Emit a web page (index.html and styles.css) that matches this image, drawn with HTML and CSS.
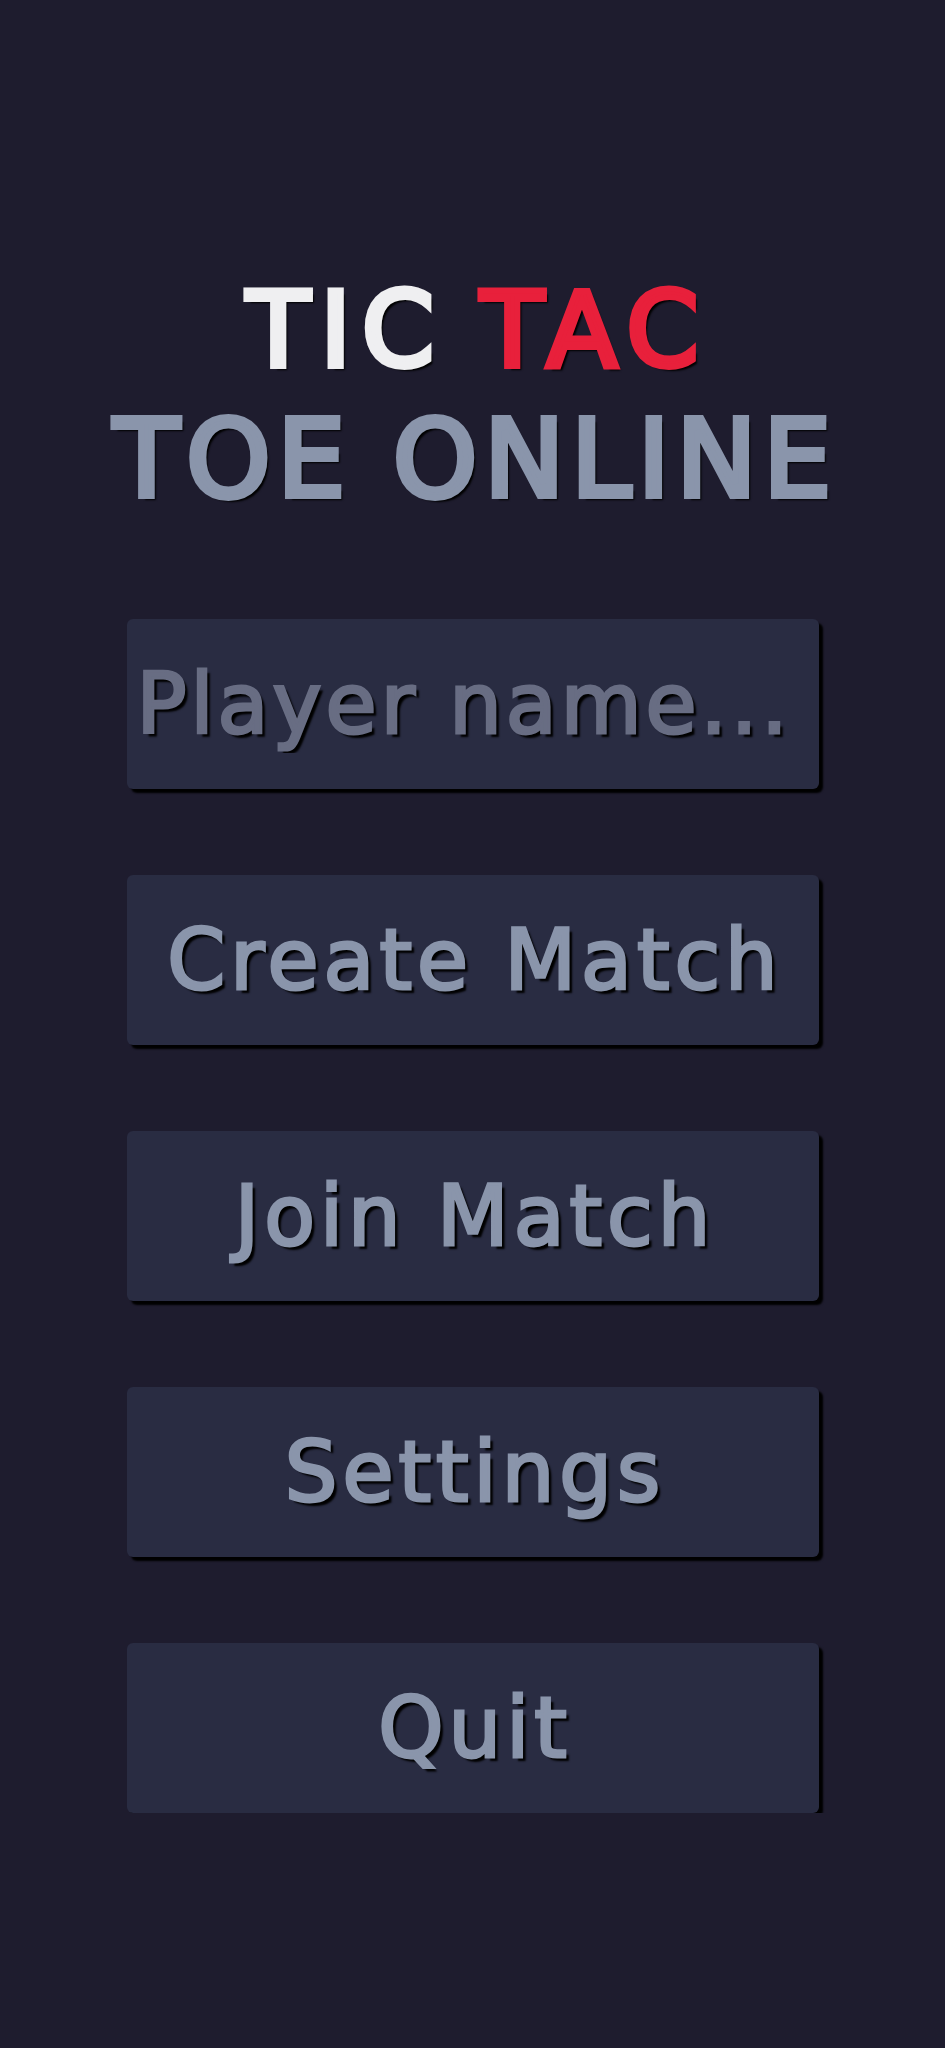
FILE: index.html
```html
<!DOCTYPE html>
<html lang="en">
<head>
    <meta charset="UTF-8">
    <title>Tic Tac Toe Online</title>
    <link rel="stylesheet" href="styles.css">
</head>
<body>

<div id="menu">
    <h1 class="titulo">
        <span class="linea arriba"><span class="blanco">TIC</span><span class="rojo">TAC</span></span>
        <span class="linea gris">TOE ONLINE</span>
    </h1>

    <input type="text" id="player-name" class="caja" placeholder="Player name...">
    <button class="caja">Create Match</button>
    <button class="caja">Join Match</button>
    <button class="caja">Settings</button>
    <button class="caja">Quit</button>
</div>

</body>
</html>
```

FILE: styles.css
```css
body {
    margin: 0;
    background-color: #1e1c2e;
    font-family: 'DejaVu Sans', 'Noto Sans', sans-serif;
}

#menu {
    width: 692px;
    margin: 0 auto;
    padding-top: 268px;
    display: flex;
    flex-direction: column;
    gap: 86px;
}

.titulo {
    margin: 0 0 7px 0;
    display: flex;
    flex-direction: column;
    align-items: center;
    font-weight: normal;
    text-shadow: 4px 4px 2px #000;
}

.linea {
    display: block;
    white-space: nowrap;
}

.arriba {
    display: flex;
    gap: 36px;
    font-size: 103px;
    line-height: 124px;
    letter-spacing: 11px;
    padding-left: 11px;
}

.blanco {
    color: #efeff1;
    -webkit-text-stroke: 6px #efeff1;
}

.rojo {
    color: #e8203b;
    -webkit-text-stroke: 6px #e8203b;
}

.linea.gris {
    font-size: 107px;
    line-height: 134px;
    letter-spacing: 7px;
    padding-left: 7px;
    color: #8a95ab;
    -webkit-text-stroke: 6px #8a95ab;
}

.caja {
    box-sizing: border-box;
    height: 170px;
    width: 100%;
    margin: 0;
    padding: 0 0 0 5px;
    background: #292c42;
    border: none;
    border-radius: 6px;
    box-shadow: 4px 4px 2px #000;
    font-family: inherit;
    font-size: 83px;
    letter-spacing: 5px;
    color: #8a95ab;
    text-shadow: 4px 4px 2px #000;
    -webkit-text-stroke: 3px #8a95ab;
    cursor: pointer;
}

#player-name {
    padding: 0 10px;
    letter-spacing: 4px;
    outline: none;
}

#player-name::placeholder {
    color: #686d83;
    -webkit-text-stroke: 3px #686d83;
}
```
